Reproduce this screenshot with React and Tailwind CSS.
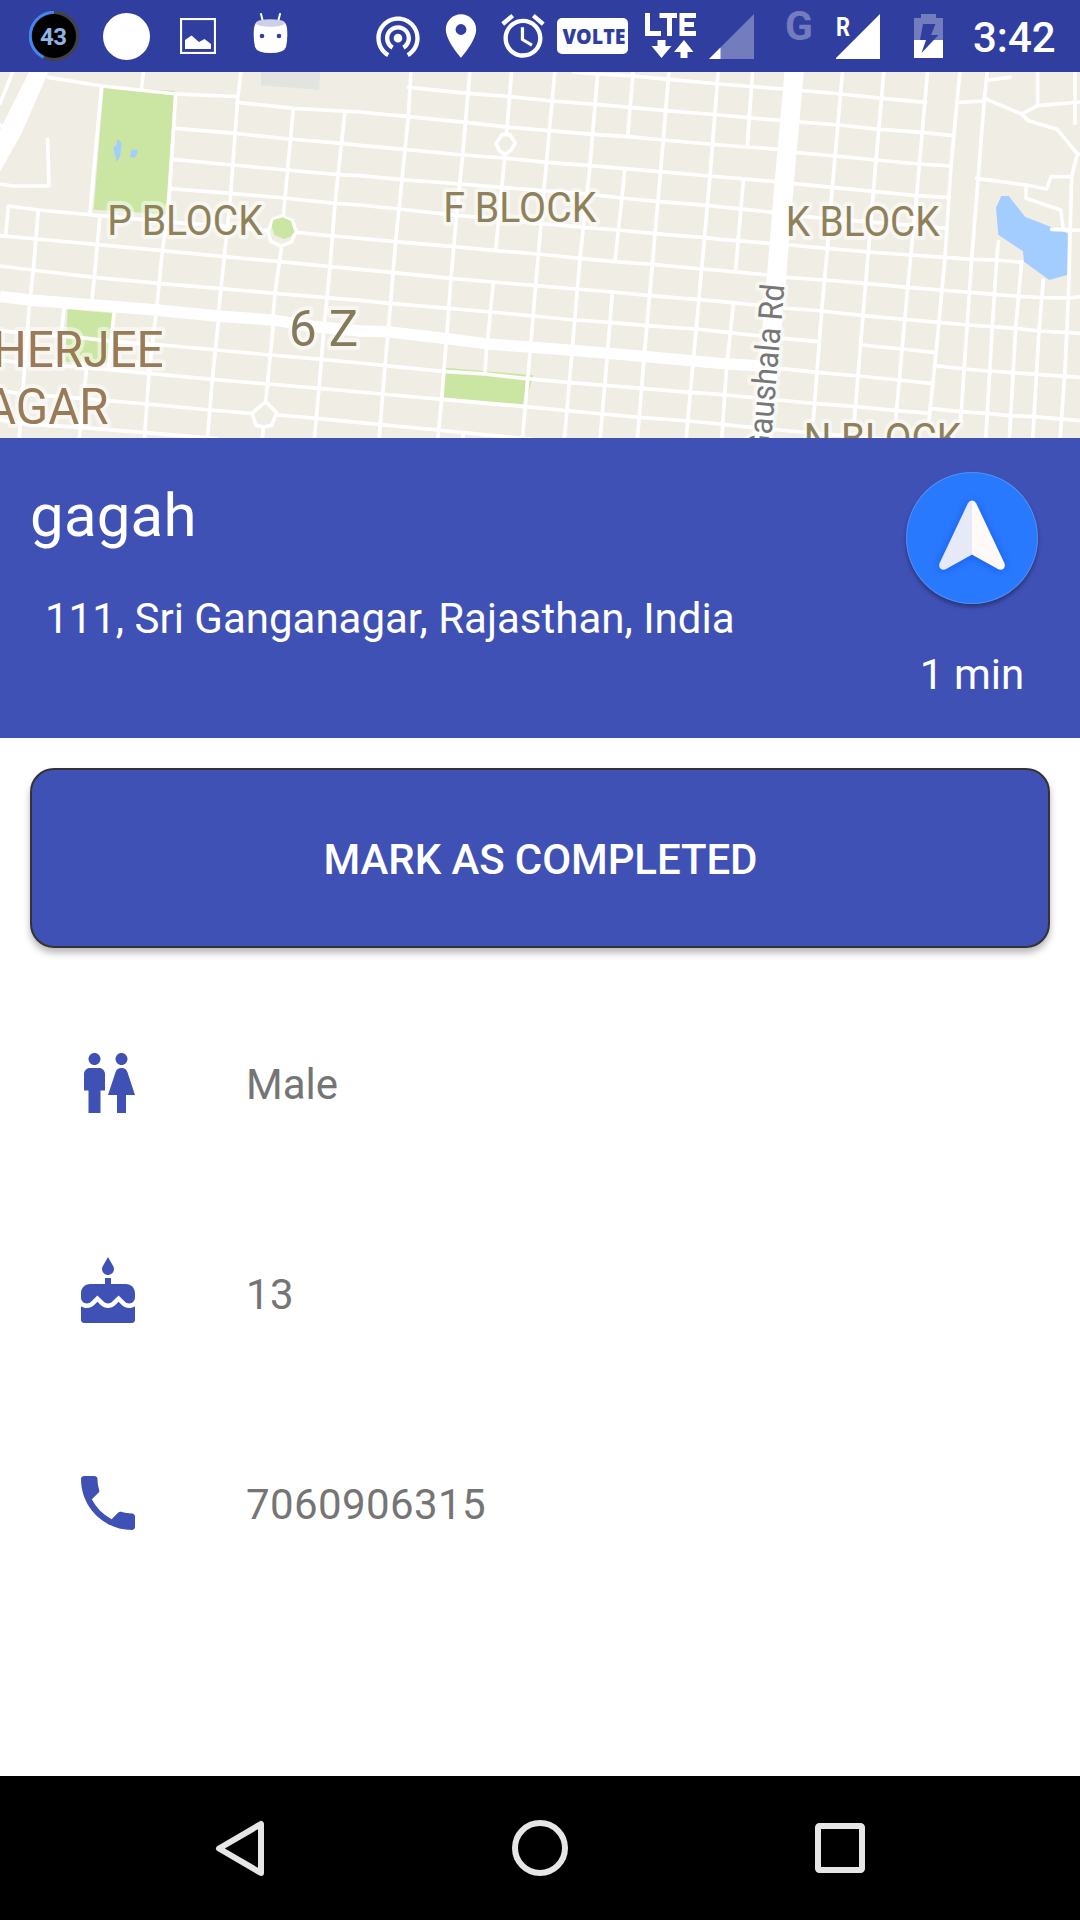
import { MdWifiTethering, MdPlace, MdAccessAlarm, MdWc, MdCake, MdPhone } from "react-icons/md";

// Street geometry, in a 3240-unit wide map space (three units per pixel).
const streets = [
  // west-east
  "145,22 305,48 530,72 713,80",
  "713,97 880,115 1080,126 1225,140 1398,157 1530,172 1648,182 1780,193 1885,200 1990,210 2160,225 2335,238 2392,248 2505,258 2630,270 2755,282 2853,288",
  "1225,52 1405,70 1530,80 1657,93 1787,103 1890,112 1997,122 2160,135 2345,152 2515,165 2640,178 2767,187 2860,197",
  "1720,6 1793,12 1900,18 2005,28 2160,42 2350,57 2525,72 2647,85 2777,97",
  "527,175 705,190 870,207 1025,220 1080,226 1213,238 1388,255 1513,264 1640,277 1770,287 1875,296 1980,305 2130,318 2325,335 2382,341 2497,352 2620,364 2750,377 2845,382",
  "517,268 698,285 858,300 1015,314 1080,317 1205,329 1380,342 1505,352 1630,362 1760,372 1865,384 1970,394 2120,406 2317,427 2380,437 2840,475",
  "510,356 692,370 852,384 1005,400 1080,405 1195,417 1370,436 1495,447 1620,460 1750,472 1855,480 1965,491 2115,503 2160,508 2307,520 2367,525 2482,535 2607,546 2730,555 2835,562 2915,568 2990,570 3065,577",
  "17,497 25,408 115,420 300,437 490,455 690,470 800,482",
  "890,487 1000,498 1080,505 1185,515 1363,530 1487,542 1615,552 1740,565 1845,575 1957,583 2105,597 2160,601 2303,615 2360,622 2473,630 2597,640 2723,652 2823,660 2910,667 2983,673 3057,679 3127,683 3205,684 3240,680",
  "0,497 110,507 293,524 487,542 673,560 840,575 990,590 1080,598 1180,608 1353,625 1480,636 1607,647 1730,657 1837,666 1950,677 2097,689 2160,694 2350,714 2465,723 2590,737 2715,748 2817,757 2905,765 2977,770 3047,775 3117,783 3240,790",
  "0,588 97,600 283,622 477,640 663,656 825,670 980,683 1080,691 1170,700 1347,715 1470,726 1600,738 1723,750 1830,757 1940,767 2090,777 2160,785 2350,805 2455,815",
  "2340,895 2450,907 2575,918 2697,930 2792,940",
  "0,782 80,790 190,797 345,815 455,822 650,840 810,855 965,868 1080,879 1155,887 1330,904 1455,912 1580,926 1710,938 1815,946 1925,955 2070,967 2160,973 2330,990 2443,1000 2567,1010 2690,1022 2790,1030",
  "0,870 75,880 260,893 447,910 637,928 805,942 957,955 1080,966 1145,972 1325,988 1575,1010 1700,1022 1810,1032 1918,1042 2065,1053 2160,1062 2230,1070 2370,1083 2800,1120",
  "0,962 70,972 245,985 440,1002 630,1020 752,1030",
  "835,1035 950,1045 1080,1058 1140,1064 1315,1080 1390,1088 1600,1108",
  "0,1050 60,1060 240,1072 435,1088 650,1106",
  "2805,887 2895,897 2965,903 3037,908 3110,913 3240,922",
  "2790,1015 2882,1025 2960,1030 3030,1037 3100,1040 3240,1052",
  "2587,825 2705,837 2800,847",
  // north-south
  "430,6 424,60",
  "305,48 270,425",
  "527,72 505,420 487,542 470,715",
  "723,6 713,85 690,400 673,560 655,730",
  "880,115 850,437",
  "845,528 825,670 818,750",
  "1035,125 1005,400 990,590 972,775 957,955 943,1110",
  "115,420 100,600 88,705 75,880 57,1110",
  "300,437 283,622 275,700",
  "192,715 183,800",
  "342,730 325,895",
  "260,893 237,1110",
  "467,740 447,910 433,1110",
  "655,755 637,928 622,1110",
  "820,765 797,995",
  "790,1070 787,1110",
  "143,207 147,348 40,348 0,342",
  "38,6 0,100",
  "0,165 14,174",
  "1233,0 1225,140 1187,515 1165,780 1155,887 1137,1110",
  "1410,0 1388,255 1370,430 1353,625 1340,800 1325,988 1313,1110",
  "1535,0 1520,190",
  "1515,252 1487,542",
  "1480,636 1463,810",
  "1460,830 1455,910",
  "1665,0 1648,182 1615,552 1592,825 1567,1110",
  "1793,12 1770,287 1740,565 1717,835 1693,1110",
  "1900,0 1883,200",
  "1875,296 1845,575",
  "1837,666 1822,855 1800,1110",
  "2007,0 1990,210 1957,583 1933,855 1912,1110",
  "2155,0 2130,318 2105,597 2080,870 2058,1110",
  "2258,0 2242,225",
  "2230,332 2207,600",
  "2200,705 2180,890 2165,1110",
  "1390,1088 1388,1110",
  "2528,0 2497,352 2482,535 2465,723 2440,1050",
  "2652,0 2620,364 2597,640 2563,1050",
  "2783,0 2750,377 2723,652 2687,1050",
  "2880,0 2853,288 2835,562 2810,830 2787,1050",
  "2962,0 2953,90 2915,568 2882,1050",
  "2995,515 2990,570 2977,770 2957,1110",
  "3065,575 3047,775 3028,1110",
  "3130,630 3117,783 3098,1110",
  "3215,320 3205,684 3195,900 3180,1110",
  "2877,97 2953,93",
  "2953,85 3065,132 3085,152 3172,178 3232,252 3215,320 3153,320 3140,357 3078,345 2930,325",
  "3078,345 3078,385 3182,420 3190,478",
  "3155,478 3240,481",
  "3065,132 3113,107 3240,96",
  "3113,0 3113,107",
  "3225,0 3225,160",
  "2965,30 3030,22",
  "3232,252 3245,252",
];

const halo = { fontFamily: "Roboto, sans-serif", stroke: "#ffffff", strokeOpacity: 0.5, strokeWidth: 24, strokeLinejoin: "round", paintOrder: "stroke" };

function MapLabel({ x, y, size, length, fill, children, ...rest }) {
  return (
    <text x={x} y={y} fontSize={size} textLength={length} lengthAdjust="spacingAndGlyphs" fill={fill} {...halo} {...rest}>
      {children}
    </text>
  );
}

function StreetMap() {
  return (
    <svg className="block h-[366px] w-full shrink-0" viewBox="0 6 3240 1098" preserveAspectRatio="none">
      <rect y="0" width="3240" height="1110" fill="#efede4" />
      <path d="M783 0H961L957 59L783 46Z" fill="#e2e4df" />
      <path d="M311 52L523 62L497 433L281 419Z" fill="#cbe6a3" />
      <path d="M203 718L338 730L325 880L195 875Z" fill="#cbe6a3" />
      <path d="M1337 893L1600 916L1585 965L1570 1003L1328 982Z" fill="#cbe6a3" />
      <path d="M352 206L365 220L360 260L350 276L340 232L350 226Z M395 239H412V252L403 264L390 260Z" fill="#a3ccff" />
      <path d="M3004 378H3026L3076 441L3155 472L3203 490V614L3148 630L3072 575L3069 544L2995 494L2988 413Z" fill="#a3ccff" />
      <g fill="none" stroke="#ffffff" strokeWidth="11" strokeLinejoin="round" strokeLinecap="round">
        {streets.map((points) => (
          <polyline key={points} points={points} />
        ))}
        <path d="M820 447L847 439L877 452L888 485L873 517L843 528L812 514L804 483Z" fill="#efede4" />
        <path d="M797 995L830 1028L815 1066L793 1071L768 1066L756 1030Z" fill="#efede4" />
        <path d="M1505 194L1530 194L1546 219L1533 241L1517 252L1500 245L1488 221Z" fill="#efede4" />
      </g>
      <path d="M820 450L848 442L873 453L883 485L872 500L852 507L824 495L815 470Z" fill="#cbe6a3" />
      <path d="M90 0H148L65 190L0 305V180Z" fill="#ffffff" />
      <polyline points="0,680 90,690 280,705 470,720 650,738 820,750 930,768 1080,783 1160,785 1340,806 1465,822 1720,841 1930,859 2160,880 2310,890" fill="none" stroke="#ffffff" strokeWidth="34" strokeLinejoin="round" />
      <polyline points="2383,0 2353,335 2328,640 2318,750 2285,1110" fill="none" stroke="#ffffff" strokeWidth="58" />
      <MapLabel x={322} y={494} size={126} length={466} fill="#8f8159">P BLOCK</MapLabel>
      <MapLabel x={1330} y={455} size={126} length={459} fill="#8f8159">F BLOCK</MapLabel>
      <MapLabel x={2357} y={499} size={126} length={462} fill="#8f8159">K BLOCK</MapLabel>
      <MapLabel x={2411} y={1148} size={126} length={472} fill="#8f8159">N BLOCK</MapLabel>
      <MapLabel x={867} y={828} size={151} length={208} fill="#857a59">6 Z</MapLabel>
      <MapLabel x={-22} y={890} size={151} length={513} fill="#997b58">HERJEE</MapLabel>
      <MapLabel x={-45} y={1062} size={151} length={371} fill="#997b58">AGAR</MapLabel>
      <MapLabel x={0} y={0} size={100} length={514} fill="#777777" transform="translate(2309 1157) rotate(-85)">Gaushala Rd</MapLabel>
    </svg>
  );
}

function BatteryMeter() {
  return (
    <svg className="ml-6 h-[50px] w-[50px]" viewBox="0 0 50 50">
      <circle cx="25" cy="25" r="25" fill="#424242" />
      <path d="M25 1.3A23.7 23.7 0 0 0 14.5 46.3" fill="none" stroke="#4285f4" strokeWidth="3" />
      <circle cx="25" cy="25" r="22" fill="#000000" />
      <text x="24.5" y="34" textAnchor="middle" fontSize="24" fontWeight="700" fontFamily="Roboto, sans-serif" fill="#8fb4e6" textLength="27">43</text>
    </svg>
  );
}

function PictureIcon() {
  return (
    <svg className="ml-[30px] h-9 w-9" viewBox="0 0 36 36">
      <rect x="1" y="1" width="34" height="34" fill="none" stroke="#ffffff" strokeWidth="2.2" />
      <path d="M5 31V22L11.5 17.5L19 24L24.5 21L31 26V31Z" fill="#ffffff" />
    </svg>
  );
}

function DroidIcon() {
  return (
    <svg className="mb-[5px] ml-[37px] h-[41px] w-[35px]" viewBox="0 0 35 41">
      <path d="M8 1L10 9M27 1L25 9" stroke="#ffffff" strokeWidth="2" strokeLinecap="round" />
      <path d="M1 15Q2 9 5 9H30Q33 9 34 15Q35 25 33 34Q31 40 17.500 40Q4 40 2 34Q0 25 1 15Z" fill="#ffffff" />
      <ellipse cx="17.5" cy="10" rx="14.500" ry="3.800" fill="#cccfe8" />
      <circle cx="9" cy="23" r="2.300" fill="#303f9f" />
      <circle cx="26" cy="23" r="2.300" fill="#303f9f" />
    </svg>
  );
}

function LteIcon() {
  return (
    <svg className="ml-[17px] h-[46px] w-[52px]" viewBox="0 0 52 46">
      <path d="M2.500 0V20.500H16M14.500 2.500H32M24.500 2.500V23M51 2.500H37V20.500H51M37 11.500H49" fill="none" stroke="#ffffff" strokeWidth="5" />
      <path d="M12.500 27H20.500V33H26.500L16.500 45L6.500 33H12.500Z" fill="#ffffff" />
      <path d="M35.500 45H42.500V39H48.500L39 27L29 39H35.500Z" fill="#ffffff" />
    </svg>
  );
}

function StatusBar() {
  return (
    <header className="flex h-[72px] shrink-0 items-center bg-[#303f9f] pl-[5px] text-white">
      <BatteryMeter />
      <div className="ml-[23.5px] h-[47px] w-[47px] rounded-full bg-white" />
      <PictureIcon />
      <DroidIcon />
      <MdWifiTethering className="ml-[84.5px] h-[52px] w-[52px] shrink-0" />
      <MdPlace className="ml-[11px] h-[52px] w-[52px] shrink-0" />
      <MdAccessAlarm className="ml-[10px] h-[52px] w-[52px] shrink-0" />
      <div className="ml-[8px] flex h-9 w-[71px] shrink-0 items-center justify-center rounded-[5px] bg-white">
        <svg className="h-9 w-[71px]" viewBox="0 0 71 36">
          <text x="5.500" y="25.500" fontSize="21" fontWeight="800" fontFamily="'Open Sans', sans-serif" fill="#303f9f" textLength="63" lengthAdjust="spacingAndGlyphs">VOLTE</text>
        </svg>
      </div>
      <LteIcon />
      <svg className="ml-3 h-[45px] w-[45px] shrink-0" viewBox="0 0 45 45">
        <path d="M45 0V45H0Z" fill="#737cbd" />
        <path d="M11.500 33.500V45H0Z" fill="#ffffff" />
      </svg>
      <span className="mb-[20px] ml-[31px] w-[27px] font-[Roboto,sans-serif] text-[41px] leading-none font-bold text-[#737cbd]">G</span>
      <svg className="ml-[24px] h-[45px] w-[46px] shrink-0" viewBox="0 0 46 45">
        <text x="0" y="21.500" fontSize="25" fontWeight="700" fontFamily="Roboto, sans-serif" fill="#ffffff" textLength="14" lengthAdjust="spacingAndGlyphs">R</text>
        <path d="M44 0V45H-1Z" fill="#ffffff" />
      </svg>
      <svg className="ml-[32px] h-[44px] w-[29px] shrink-0" viewBox="0 0 29 44">
        <path d="M0 4H7V0H22V4H29V27H0Z" fill="#737cbd" />
        <path d="M0 26H29V44H0Z" fill="#ffffff" />
        <path d="M9 10H21.500L17 21H24.500L7.500 39L12 26H6Z" fill="#303f9f" />
      </svg>
      <span className="ml-[30px] pt-[3px] font-[Roboto,sans-serif] text-[42px] leading-none font-medium">3:42</span>
    </header>
  );
}

function NavigateButton() {
  return (
    <button className="h-[132px] w-[132px] rounded-full bg-[#2979ff] shadow-[0_3px_4px_rgba(0,0,0,0.35)] ring-1 ring-[#6f9ae8]/60 ring-inset">
      <svg className="h-[132px] w-[132px]" viewBox="0 0 132 132">
        <defs>
          <filter id="arrowShadow" x="-30%" y="-30%" width="160%" height="160%">
            <feDropShadow dx="0" dy="1" stdDeviation="5" floodColor="#1546d8" floodOpacity="0.6" />
          </filter>
        </defs>
        <g filter="url(#arrowShadow)">
          <path d="M66 28.500Q63.300 28.500 61.800 31.500L33.500 91.500Q32.500 95 35 97Q37 98.300 40 97L66 82.500Z" fill="#e5eaf6" />
          <path d="M66 28.500Q68.700 28.500 70.200 31.500L98.500 91.500Q99.500 95 97 97Q95 98.300 92 97L66 82.500Z" fill="#fffaf7" />
        </g>
      </svg>
    </button>
  );
}

function DestinationPanel() {
  return (
    <section className="flex h-[300px] shrink-0 justify-between bg-[#3f51b5] pr-[42px] pl-[30px] text-white">
      <div className="pt-[43px]">
        <h1 className="text-[60px] leading-[70px] tracking-[0.2px]">gagah</h1>
        <p className="mt-[43px] pl-[15px] text-[42px] leading-[50px] whitespace-nowrap">111, Sri Ganganagar, Rajasthan, India</p>
      </div>
      <div className="flex w-[132px] flex-col items-center pt-[33.5px]">
        <NavigateButton />
        <p className="mt-[46.5px] text-[42px] leading-[50px] whitespace-nowrap">1 min</p>
      </div>
    </section>
  );
}

const details = [
  { Icon: MdWc, text: "Male", tracking: "" },
  { Icon: MdCake, text: "13", tracking: "tracking-[0.4px]" },
  { Icon: MdPhone, text: "7060906315", tracking: "tracking-[0.4px]" },
];

function NavigationBar() {
  return (
    <footer className="flex h-36 shrink-0 items-center justify-between bg-black pr-[215px] pl-[215px]">
      <svg className="h-[57px] w-[50px]" viewBox="0 0 50 57" fill="none" stroke="#e6e6e6" strokeWidth="6" strokeLinejoin="round">
        <path d="M46 4V53L4 28.500Z" />
      </svg>
      <svg className="h-[57px] w-[57px]" viewBox="0 0 57 57" fill="none" stroke="#e6e6e6" strokeWidth="6">
        <circle cx="28" cy="28" r="25" />
      </svg>
      <svg className="h-[50px] w-[50px]" viewBox="0 0 50 50" fill="none" stroke="#e6e6e6" strokeWidth="6">
        <rect x="3" y="3" width="44" height="44" rx="1.500" />
      </svg>
    </footer>
  );
}

export default function App() {
  return (
    <div className="flex h-[1920px] w-[1080px] flex-col overflow-hidden bg-white font-[Roboto,sans-serif]">
      <StatusBar />
      <StreetMap />
      <DestinationPanel />
      <main className="flex-1 px-[30px] pt-[30px]">
        <button className="flex h-[180px] w-full items-center justify-center rounded-3xl border-2 border-[#333333] bg-[#3f51b5] pt-[3px] pl-px text-[42px] leading-[50px] font-medium tracking-[-0.1px] text-white shadow-[0_5px_7px_rgba(0,0,0,0.28)]">
          MARK AS COMPLETED
        </button>
        <ul className="mt-[30px]">
          {details.map(({ Icon, text, tracking }) => (
            <li key={text} className="flex h-[210px] items-center pl-[42px]">
              <Icon className="h-[72px] w-[72px] text-[#3f51b5]" />
              <span className={`ml-[102px] pt-[3px] text-[42px] leading-[50px] text-[#757575] ${tracking}`}>{text}</span>
            </li>
          ))}
        </ul>
      </main>
      <NavigationBar />
    </div>
  );
}
